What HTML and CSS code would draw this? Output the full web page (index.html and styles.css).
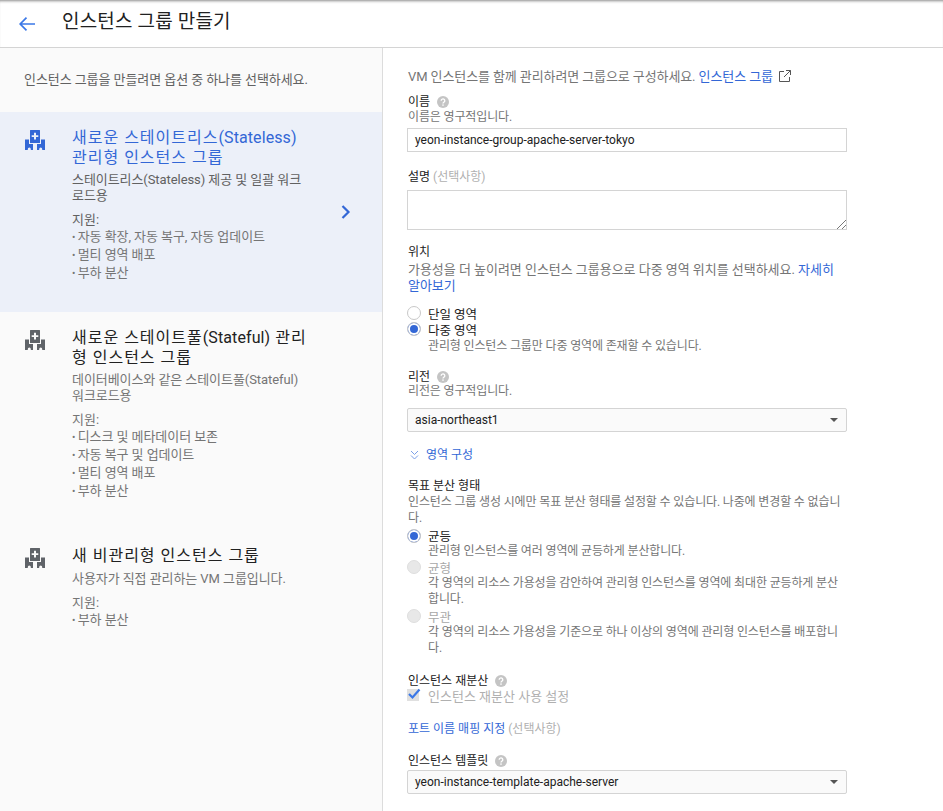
FILE: index.html
```html
<!DOCTYPE html>
<html lang="ko">
<head>
<meta charset="utf-8">
<title>인스턴스 그룹 만들기</title>
<link rel="stylesheet" href="styles.css">
</head>
<body>
<svg class="defs" width="0" height="0"><defs>
<symbol id="ig" viewBox="0 0 20 20"><path fill="currentColor" fill-rule="evenodd" d="M5.500 0h9a.5.5 0 0 1 .5.500V13H5V.500a.5.500 0 0 1 .5-.500zM9 2.800v2.500H6.700v1.700H9v2.400h2V7h2.300V5.300H11V2.800zM0 9.500h4V14h4v6H5.800v-1a1.500 1.500 0 0 0-3 0v1H0zM20 9.500h-4V14h-4v6h2.200v-1a1.500 1.500 0 0 1 3 0v1H20z"/></symbol>
<symbol id="help" viewBox="0 0 12 12"><circle cx="6" cy="6" r="6" fill="#c4c4c4"/><path d="M4.200 4.700a1.800 1.700 0 1 1 2.900 1.300c-.7.500-1.100.8-1.100 1.600" fill="none" stroke="#fff" stroke-width="1.300"/><rect x="5.300" y="8.400" width="1.400" height="1.400" fill="#fff"/></symbol>
<symbol id="caret" viewBox="0 0 8 4"><path d="M0 0h8L4 4z" fill="#555"/></symbol>
</defs></svg>
<header class="topbar">
  <svg class="back" width="16" height="14" viewBox="0 0 16 14"><path d="M16 7H1.500M7.500 .7L1.200 7l6.300 6.300" fill="none" stroke="#3b78e7" stroke-width="1.700"/></svg>
  <h1>인스턴스 그룹 만들기</h1>
</header>
<main class="page">
  <aside class="side">
    <p class="intro">인스턴스 그룹을 만들려면 옵션 중 하나를 선택하세요.</p>
    <section class="opt opt-active">
      <svg class="opt-icon"><use href="#ig"/></svg>
      <div class="opt-body">
        <h2>새로운 스테이트리스<span class="lat">(Stateless)</span> 관리형 인스턴스 그룹</h2>
        <p class="opt-sub">스테이트리스(Stateless) 제공 및 일괄 워크로드용</p>
        <p class="opt-label">지원:</p>
        <ul><li>자동 확장, 자동 복구, 자동 업데이트</li><li>멀티 영역 배포</li><li>부하 분산</li></ul>
      </div>
      <svg class="chev" width="10" height="14" viewBox="0 0 10 14"><path d="M1.500 1l6 6-6 6" fill="none" stroke="#3367d6" stroke-width="2.200"/></svg>
    </section>
    <section class="opt">
      <svg class="opt-icon"><use href="#ig"/></svg>
      <div class="opt-body">
        <h2>새로운 스테이트풀<span class="lat">(Stateful)</span> 관리형 인스턴스 그룹</h2>
        <p class="opt-sub">데이터베이스와 같은 스테이트풀(Stateful) 워크로드용</p>
        <p class="opt-label">지원:</p>
        <ul><li>디스크 및 메타데이터 보존</li><li>자동 복구 및 업데이트</li><li>멀티 영역 배포</li><li>부하 분산</li></ul>
      </div>
    </section>
    <section class="opt">
      <svg class="opt-icon"><use href="#ig"/></svg>
      <div class="opt-body">
        <h2>새 비관리형 인스턴스 그룹</h2>
        <p class="opt-sub">사용자가 직접 관리하는 VM 그룹입니다.</p>
        <p class="opt-label">지원:</p>
        <ul><li>부하 분산</li></ul>
      </div>
    </section>
  </aside>
  <div class="form">
    <p class="hint top">VM 인스턴스를 함께 관리하려면 그룹으로 구성하세요. <a>인스턴스 그룹</a>
      <svg class="ext" width="12" height="12" viewBox="0 0 12 12"><path d="M5 1.500H.5v10h10V7M7 .5h4.500V5M11.500.5L5 7" fill="none" stroke="#555" stroke-width="1"/></svg></p>

    <div class="label f-name">이름 <svg class="help"><use href="#help"/></svg></div>
    <p class="hint">이름은 영구적입니다.</p>
    <div class="input">yeon-instance-group-apache-server-tokyo</div>

    <div class="label f-desc">설명 <span class="opt-txt">(선택사항)</span></div>
    <div class="textarea">
      <svg class="grip" width="9" height="9" viewBox="0 0 9 9"><path d="M0 9L9 0M5 9L9 5" stroke="#777" stroke-width="1"/></svg>
    </div>

    <div class="label f-loc">위치</div>
    <p class="hint wrap loc-hint">가용성을 더 높이려면 인스턴스 그룹용으로 다중 영역 위치를 선택하세요. <a>자세히 알아보기</a></p>
    <div class="radios r-loc">
      <div class="radio"><span class="dot"></span><span class="r-text">단일 영역</span></div>
      <div class="radio"><span class="dot on"></span><span class="r-text">다중 영역</span></div>
      <p class="hint sub sub-loc">관리형 인스턴스 그룹만 다중 영역에 존재할 수 있습니다.</p>
    </div>

    <div class="label f-region">리전 <svg class="help"><use href="#help"/></svg></div>
    <p class="hint">리전은 영구적입니다.</p>
    <div class="select s-region">asia-northeast1<svg class="caret"><use href="#caret"/></svg></div>

    <a class="toggle"><svg width="9" height="10" viewBox="0 0 9 10"><path d="M1 1l3.500 3.500L8 1M1 5.500L4.500 9 8 5.500" fill="none" stroke="#7b9fe8" stroke-width="1"/></svg>영역 구성</a>

    <div class="label f-shape">목표 분산 형태</div>
    <p class="hint wrap">인스턴스 그룹 생성 시에만 목표 분산 형태를 설정할 수 있습니다. 나중에 변경할 수 없습니다.</p>
    <div class="radios r-shape">
      <div class="radio first"><span class="dot on"></span><span class="r-text">균등</span></div>
      <p class="hint sub">관리형 인스턴스를 여러 영역에 균등하게 분산합니다.</p>
      <div class="radio off"><span class="dot"></span><span class="r-text">균형</span></div>
      <p class="hint sub sub-gap">각 영역의 리소스 가용성을 감안하여 관리형 인스턴스를 영역에 최대한 균등하게 분산합니다.</p>
      <div class="radio off"><span class="dot"></span><span class="r-text">무관</span></div>
      <p class="hint sub">각 영역의 리소스 가용성을 기준으로 하나 이상의 영역에 관리형 인스턴스를 배포합니다.</p>
    </div>

    <div class="label f-rebal">인스턴스 재분산 <svg class="help"><use href="#help"/></svg></div>
    <div class="check"><span class="box"><svg width="14" height="12" viewBox="0 0 14 12"><path d="M2 6l3.500 3.500L12.500 1.500" fill="none" stroke="#3b78e7" stroke-width="2.200"/></svg></span>인스턴스 재분산 사용 설정</div>

    <div class="port"><a>포트 이름 매핑 지정</a> <span class="opt-txt">(선택사항)</span></div>

    <div class="label f-tmpl">인스턴스 템플릿 <svg class="help"><use href="#help"/></svg></div>
    <div class="select s-tmpl">yeon-instance-template-apache-server<svg class="caret"><use href="#caret"/></svg></div>
  </div>
</main>
</body>
</html>
```

FILE: styles.css
```css
* { box-sizing: border-box; }
html, body { height: 100%; }
body {
  margin: 0;
  height: 811px;
  overflow: hidden;
  background: #fff;
  color: #212121;
  font-family: Roboto, "Noto Sans CJK KR", sans-serif;
  font-size: 13px;
}
.defs { position: absolute; }
p, h1, h2, ul { margin: 0; padding: 0; }
a { color: #3367d6; }

.topbar {
  height: 48px;
  display: flex;
  align-items: center;
  padding: 0 0 0 19px;
  border-bottom: 1px solid #d4d4d4;
  box-shadow: inset 0 3px 3px -2px #8a8a8a;
}
.back { margin-right: 27px; }
.topbar h1 { font-size: 19px; letter-spacing: .18px; font-weight: 400; color: #212121; line-height: 24px; margin-bottom: 4px; }

.page { display: flex; height: 763px; }
.side {
  width: 383px;
  flex: none;
  background: #fafafa;
  border-right: 1px solid #dcdcdc;
}
.intro { padding: 24px 0 0 24px; height: 64px; font-size: 13px; letter-spacing: -.07px; line-height: 16px; color: #616161; }
.opt { display: flex; position: relative; padding: 16px 24px 30px 25px; color: #212121; }
.opt-active { background: #ecf0f9; height: 200px; color: #3367d6; }
.opt-icon { width: 20px; height: 20px; margin-top: 2px; margin-right: 27px; flex: none; color: #5f6368; }
.opt-active .opt-icon { color: #3367d6; }
.opt-body { width: 236px; }
.opt h2 { font-size: 16px; letter-spacing: 1px; font-weight: 400; line-height: 19.500px; }
.lat { letter-spacing: .1px; }
.opt-sub { margin-top: 5px; font-size: 13px; letter-spacing: -.07px; line-height: 16px; color: #757575; }
.opt-active .opt-sub, .opt-active .opt-label, .opt-active li { color: #616161; }
.opt-label { margin-top: 8px; height: 16px; font-size: 13px; line-height: 16px; color: #757575; }
.opt ul { list-style: none; }
.opt li { height: 18px; font-size: 13px; letter-spacing: -.07px; line-height: 18px; color: #757575; }
.opt li::before { content: "• "; font-size: 10px; }
.chev { position: absolute; left: 341px; top: 93px; }

.form { padding: 0 0 0 24px; width: 464px; }
.hint { font-size: 12px; letter-spacing: -.14px; line-height: 16px; color: #757575; padding-left: 1px; }
.hint.top { margin-top: 21px; font-size: 13px; letter-spacing: -.1px; white-space: nowrap; }
.hint.wrap { width: 441px; }
.hint.loc-hint { font-size: 13px; letter-spacing: -.03px; margin-top: 2px; }
.ext { vertical-align: -1px; margin-left: 3px; }
.label { font-size: 12px; line-height: 16px; color: #212121; display: flex; align-items: center; gap: 7px; padding-left: 1px; }
.help { width: 12px; height: 12px; }
.opt-txt { color: #b0b0b0; }
.f-name { margin-top: 9px; height: 15px; }
.input {
  margin-top: 3px;
  width: 440px; height: 24px;
  border: 1px solid #d4d4d4;
  padding: 0 7px;
  line-height: 22px;
  font-size: 12px;
  background: #fff;
}
.f-desc { margin-top: 17px; gap: 3px; }
.textarea {
  margin-top: 5px;
  width: 440px; height: 40px;
  border: 1px solid #d4d4d4;
  background: #fff;
  position: relative;
}
.grip { position: absolute; right: 0; bottom: 0; }
.f-loc { margin-top: 14px; }
.radios { display: flex; flex-direction: column; }
.r-loc { margin-top: 11px; }
.radio { display: flex; align-items: center; height: 16px; font-size: 12.500px; }
.radio.first { height: 15px; }
.dot {
  width: 14px; height: 14px;
  border-radius: 50%;
  border: 1px solid #c8c8c8;
  background: #fff;
  margin-right: 7px;
  flex: none;
}
.dot.on { background: #3367d6; box-shadow: inset 0 0 0 2px #fff; }
.radio.off .dot { background: #e8e8e8; border-color: #dedede; }
.radio.off .r-text { color: #a8a8a8; }
.sub { margin-left: 20px; width: 420px; }
.sub-loc { margin-top: 1px; }
.sub-gap { margin-bottom: 1px; }
.f-region { margin-top: 16px; height: 13px; }
.select {
  position: relative;
  width: 440px; height: 24px;
  border: 1px solid #d4d4d4;
  border-radius: 2px;
  padding: 0 7px;
  line-height: 22px;
  font-size: 12px;
  background: #fafafa;
}
.s-region { margin-top: 9px; }
.caret { position: absolute; right: 8px; top: 9px; width: 8px; height: 4px; }
.toggle { display: flex; align-items: center; gap: 7px; margin-top: 15px; font-size: 12px; line-height: 16px; color: #3367d6; padding-left: 3px; }
.f-shape { margin-top: 15px; }
.r-shape { margin-top: 2px; }
.f-rebal { margin-top: 18px; height: 14px; }
.check { display: flex; align-items: center; height: 16px; margin-top: -1px; color: #b0b0b0; font-size: 13px; gap: 9px; }
.box { width: 12px; height: 12px; background: #e0e0e0; position: relative; flex: none; }
.box svg { position: absolute; left: 0; top: -1px; }
.port { margin-top: 18px; padding-left: 1px; font-size: 12px; line-height: 16px; }
.f-tmpl { margin-top: 16px; }
.s-tmpl { margin-top: 1px; }
```
